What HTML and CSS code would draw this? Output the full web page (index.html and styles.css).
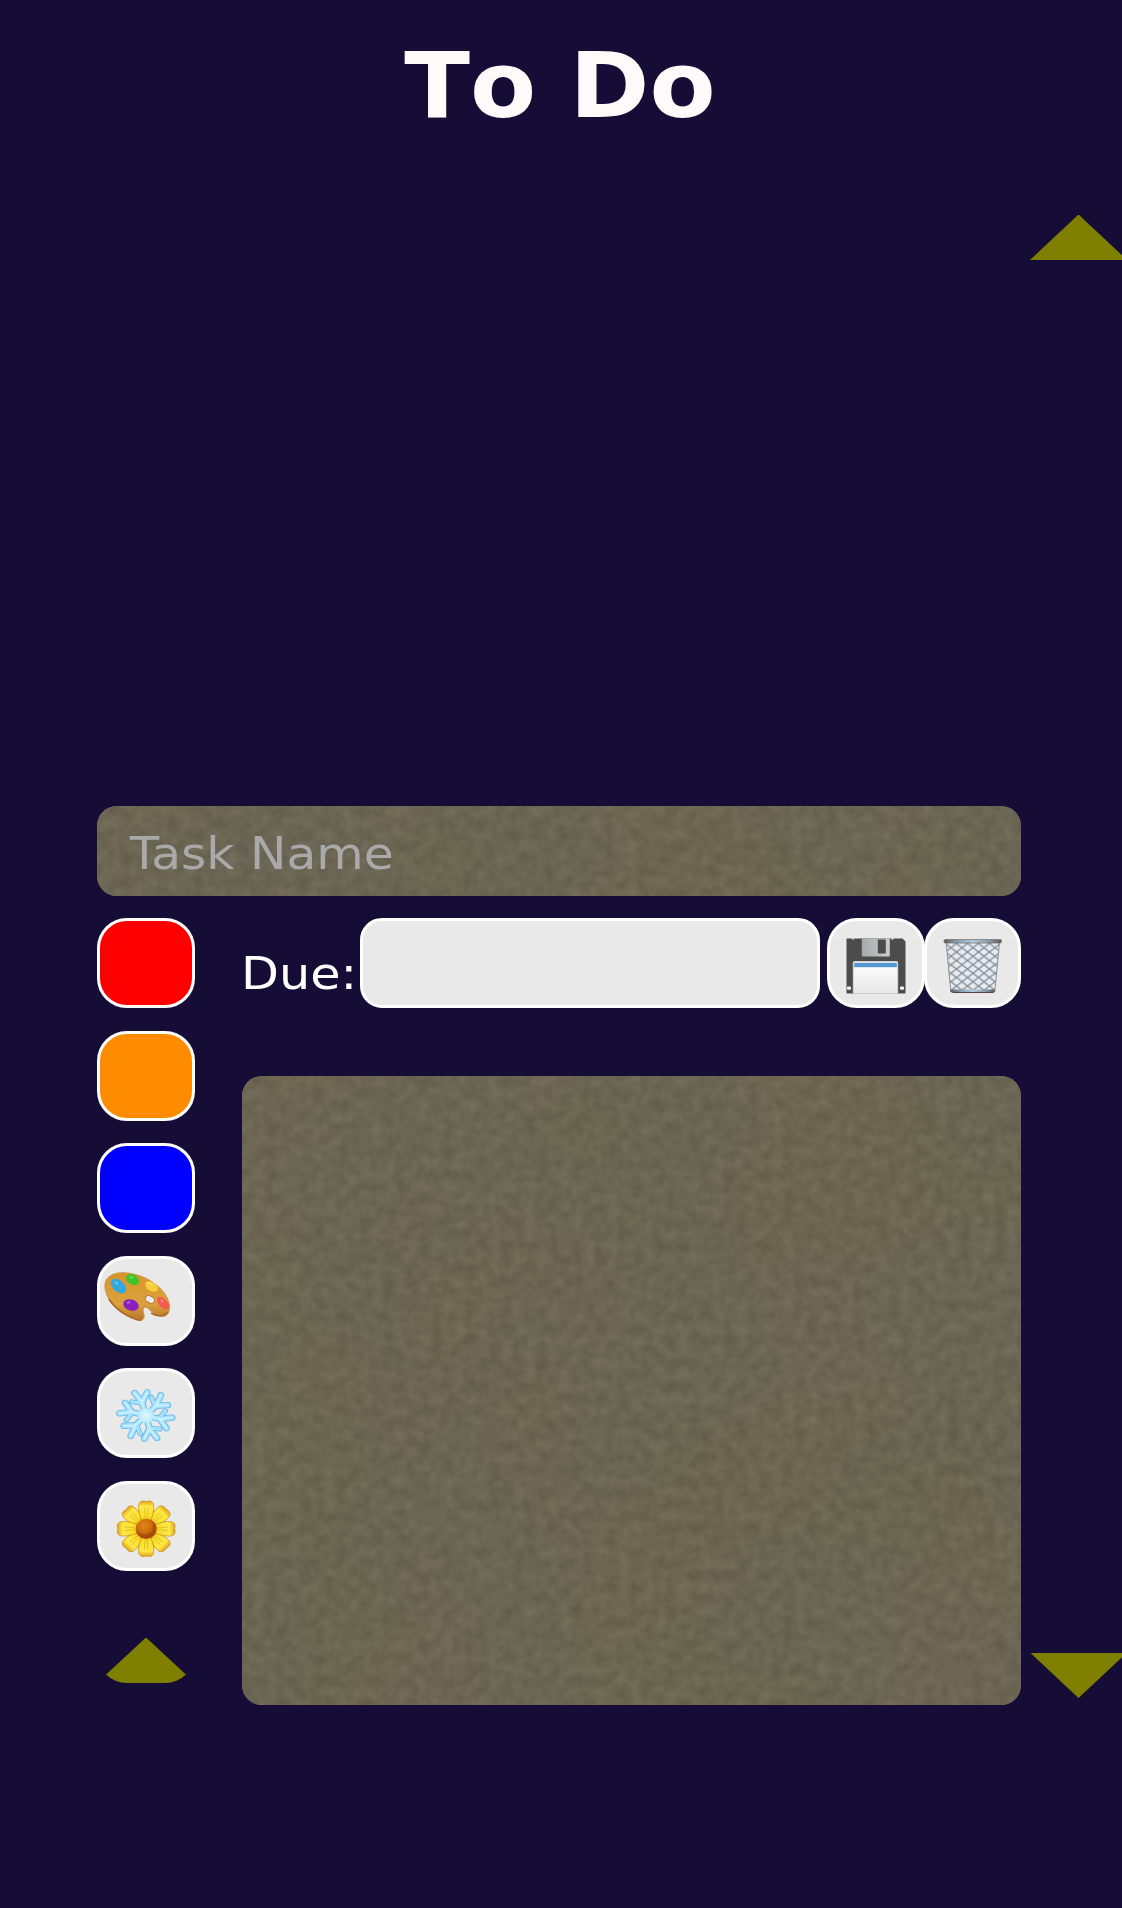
FILE: index.html
```html
<!DOCTYPE html>
<html lang="en">
<head>
<meta charset="utf-8">
<title>To Do</title>
<link rel="stylesheet" href="styles.css">
</head>
<body>
<h1 class="title">To Do</h1>
<main class="board">
  <section class="tasks"></section>
  <form class="editor">
    <div class="field name-field">
      <svg class="texture" aria-hidden="true">
        <defs>
          <filter id="stone" x="0" y="0" width="100%" height="100%" color-interpolation-filters="sRGB">
            <feTurbulence type="fractalNoise" baseFrequency="0.085" numOctaves="2" seed="11" result="fine"/>
            <feColorMatrix in="fine" values=".15 0 0 0 .344  .15 0 0 0 .324  .14 0 0 0 .253  0 0 0 0 1" result="grain"/>
            <feTurbulence type="fractalNoise" baseFrequency="0.006" numOctaves="2" seed="4" result="broad"/>
            <feColorMatrix in="broad" values=".06 0 0 0 .39  0 .03 0 0 .383  0 0 .08 0 .285  0 0 0 0 1" result="stain"/>
            <feComposite in="grain" in2="stain" operator="arithmetic" k2=".65" k3=".35"/>
          </filter>
        </defs>
        <rect width="100%" height="100%" filter="url(#stone)"/>
      </svg>
      <input class="name" type="text" placeholder="Task Name" aria-label="Task name">
    </div>
    <div class="tools">
      <button type="button" class="btn red" aria-label="Red"></button>
      <button type="button" class="btn orange" aria-label="Orange"></button>
      <button type="button" class="btn blue" aria-label="Blue"></button>
      <button type="button" class="btn" aria-label="Palette">
        <svg class="icon" viewBox="3.500 4 91 84">
          <defs><linearGradient id="wood" x2="0" y2="1"><stop stop-color="#d99427"/><stop offset=".65" stop-color="#dba13f"/><stop offset="1" stop-color="#b97327"/></linearGradient></defs>
          <path d="M8 29C9 19 22 16 34 18.500C48 21 61 29 68 39C74 48 74 57 69 60.500C65 62.500 58 60 54 56C51 53 48 51 46.500 53C45 56 49 61 46 64.500C42 68 31 61 24 57C14 50 7 39 8 29Z" fill="url(#wood)" stroke="#ce9650"/>
          <path d="M12 44C18 54 31 63 44 65.500M54 58C61 62 67 62 71 57" fill="none" stroke="#a8692b" stroke-width="1.600"/>
          <ellipse cx="21.500" cy="31" rx="9" ry="5.600" transform="rotate(42 21.500 31)" fill="#32a8df"/>
          <ellipse cx="35.500" cy="24.500" rx="7" ry="5" transform="rotate(30 35.500 24.500)" fill="#3ec52c"/>
          <ellipse cx="54.500" cy="31.500" rx="7" ry="4.500" transform="rotate(32 54.500 31.500)" fill="#f7cf3c"/>
          <ellipse cx="66" cy="48" rx="7.500" ry="4.300" transform="rotate(45 66 48)" fill="#f35c4c"/>
          <ellipse cx="34" cy="50" rx="8" ry="5.500" transform="rotate(18 34 50)" fill="#8c20bd"/>
          <ellipse cx="53" cy="44.500" rx="5" ry="3.400" transform="rotate(28 53 44.500)" fill="#e9e9e9" stroke="#ae7a34"/>
          <path d="M18 27l3 2M33 22l3 1M51 28l4 1M64 45l2 2M30 48l3-1" stroke="#fff" stroke-opacity=".3" stroke-width="2"/>
        </svg>
      </button>
      <button type="button" class="btn" aria-label="Snowflake">
        <svg class="icon" viewBox="3.500 3.500 91 84">
          <defs>
            <path id="arm" d="M0 0H16M14 0L25 -4.500M14 0L22.500 7.500"/>
            <g id="flake"><use href="#arm" transform="rotate(15)"/><use href="#arm" transform="rotate(75)"/><use href="#arm" transform="rotate(135)"/><use href="#arm" transform="rotate(195)"/><use href="#arm" transform="rotate(255)"/><use href="#arm" transform="rotate(315)"/></g>
            <path id="lobe" d="M13 0L17-9.500"/>
            <g id="lobes"><use href="#lobe" transform="rotate(15)"/><use href="#lobe" transform="rotate(75)"/><use href="#lobe" transform="rotate(135)"/><use href="#lobe" transform="rotate(195)"/><use href="#lobe" transform="rotate(255)"/><use href="#lobe" transform="rotate(315)"/></g>
            <radialGradient id="ice"><stop stop-color="#e3f7ff"/><stop offset="1" stop-color="#b8eaff"/></radialGradient>
          </defs>
          <g transform="translate(48.800 48) scale(1.040 .98)" fill="none" stroke-linecap="round" stroke-linejoin="round">
            <use href="#lobes" stroke="#66b6e4" stroke-width="5"/>
            <use href="#flake" stroke="#66b6e4" stroke-width="6.400"/>
            <use href="#lobes" stroke="#a5e2ff" stroke-width="3.400"/>
            <use href="#flake" stroke="#a5e2ff" stroke-width="4.800"/>
            <use href="#flake" stroke="#cff2ff" stroke-width="1.500"/>
            <circle r="7.500" fill="url(#ice)"/>
          </g>
        </svg>
      </button>
      <button type="button" class="btn" aria-label="Flower">
        <svg class="icon" viewBox="3.500 3.500 91 84">
          <defs>
            <linearGradient id="petalfill" gradientUnits="userSpaceOnUse" x1="0" y1="-6" x2="0" y2="-29"><stop stop-color="#e5a914"/><stop offset=".3" stop-color="#f9df2d"/><stop offset=".75" stop-color="#ffe945"/><stop offset="1" stop-color="#dfa21b"/></linearGradient>
            <radialGradient id="seed" cx=".4" cy=".35"><stop stop-color="#dc8618"/><stop offset=".7" stop-color="#cd6e0d"/><stop offset="1" stop-color="#a94b08"/></radialGradient>
            <g id="petal"><path d="M-4.500-7C-5.500-12-8.500-20-7.300-25.500C-6.500-29-2.500-29.500 0-28.300C2.500-29.500 6.500-29 7.300-25.500C8.500-20 5.500-12 4.500-7Z" fill="url(#petalfill)" stroke="#c99017" stroke-width=".8"/><path d="M-1-11L-1.800-22M1-11L1.800-22" stroke="#dcae20" stroke-width=".7"/></g>
          </defs>
          <g transform="translate(49.200 48.300) scale(1 .96)">
            <use href="#petal" transform="rotate(45)"/><use href="#petal" transform="rotate(135)"/><use href="#petal" transform="rotate(225)"/><use href="#petal" transform="rotate(315)"/>
            <use href="#petal"/><use href="#petal" transform="rotate(90)"/><use href="#petal" transform="rotate(180)"/><use href="#petal" transform="rotate(270)"/>
            <circle r="10.500" fill="url(#seed)"/>
          </g>
        </svg>
      </button>
      <button type="button" class="collapse" aria-label="Collapse"><span class="arrow up"></span></button>
    </div>
    <div class="details">
      <div class="due-row">
        <label class="due-label" for="due">Due:</label>
        <input class="due" id="due" type="text">
        <button type="button" class="btn save" aria-label="Save">
          <svg class="icon" viewBox="4 3.500 91 84">
            <defs><linearGradient id="metal"><stop stop-color="#a7a9ac"/><stop offset="1" stop-color="#cacbcc"/></linearGradient><linearGradient id="paper" x2="0" y2="1"><stop stop-color="#fff"/><stop offset="1" stop-color="#e7e7e8"/></linearGradient></defs>
            <path d="M20 21H76L79 24V76H20Z" fill="#4c4c4c"/>
            <path d="M25 21h3l-1.500 1.500zM64 21h4l-2 1.500z" fill="#e9e9e9"/>
            <rect x="35.300" y="21" width="28" height="18" rx="1" fill="url(#metal)"/>
            <rect x="51.300" y="22" width="8" height="14" rx=".7" fill="#4b4b4c"/>
            <path d="M26.300 76V45.500Q26.300 43.500 28.300 43.500H69.700Q71.700 43.500 71.700 45.500V76" fill="#d2d2d2"/>
            <rect x="27.500" y="45" width="43" height="31" fill="url(#paper)"/>
            <rect x="27.700" y="45.500" width="42.600" height="4.200" fill="#5197d2"/>
            <rect x="20.500" y="69" width="4" height="3.300" rx="1" fill="#f2f2f2"/>
            <rect x="73.500" y="69" width="4" height="3.300" rx="1" fill="#f2f2f2"/>
          </svg>
        </button>
        <button type="button" class="btn trash" aria-label="Delete">
          <svg class="icon" viewBox="4 3.500 91 84">
            <defs>
              <pattern id="mesh" width="11" height="8.500" patternUnits="userSpaceOnUse" x="44" y="26"><path d="M-2.200-1.700L13.200 10.200M-2.200 10.200L13.200-1.700" stroke="#7d858d" stroke-width="1.300" fill="none"/></pattern>
              <linearGradient id="rim"><stop stop-color="#66564d"/><stop offset=".2" stop-color="#8197ac"/><stop offset=".5" stop-color="#b2cadb"/><stop offset=".8" stop-color="#8295a6"/><stop offset="1" stop-color="#66564d"/></linearGradient>
            </defs>
            <path d="M22.700 25H76L71.300 74H27.300Z" fill="#e5ebf0"/>
            <path d="M22.700 25H76L71.300 74H27.300Z" fill="url(#mesh)" stroke="#8a9299"/>
            <rect x="20.500" y="22" width="57.500" height="3.600" rx="1.400" fill="url(#rim)" stroke="#76716f" stroke-width=".7"/>
            <rect x="27" y="72" width="44.500" height="3" rx="1.300" fill="url(#rim)"/>
            <path d="M29 75H70" stroke="#54433c" stroke-width="1"/>
          </svg>
        </button>
      </div>
      <div class="field notes-field">
        <svg class="texture" aria-hidden="true"><rect width="100%" height="100%" filter="url(#stone)"/></svg>
        <textarea class="notes" aria-label="Notes"></textarea>
      </div>
    </div>
  </form>
  <nav class="scroller">
    <span class="arrow up"></span>
    <span class="arrow down"></span>
  </nav>
</main>
</body>
</html>
```
FILE: styles.css
```css
* { box-sizing: border-box; }
body {
  margin: 0;
  height: 1908px;
  overflow: hidden;
  background: #160d36;
  color: #fff;
  font-family: "DejaVu Sans", Verdana, sans-serif;
}
.title {
  margin: 0;
  height: 214.500px;
  padding: 33px 2px 0 0;
  text-align: center;
  font-size: 90px;
  line-height: 105px;
  font-kerning: none;
  transform: scaleX(1.07);
  color: #fffafa;
}
.board {
  display: grid;
  grid-template-columns: 924px 97px;
  grid-template-rows: 591.500px 899px;
  column-gap: 9px;
  padding-left: 97px;
}
.tasks { grid-area: 1 / 1; }
.editor {
  grid-area: 2 / 1;
  display: grid;
  grid-template-columns: 98px 779px;
  grid-template-rows: 90px 787px;
  column-gap: 47px;
  row-gap: 22px;
}
.scroller {
  grid-area: 1 / 2 / 3 / 3;
  display: flex;
  flex-direction: column;
  justify-content: space-between;
  padding-bottom: 7px;
}
.arrow { display: block; width: 97px; height: 45.500px; background: #808000; }
.collapse .arrow { width: 98px; }
.up { clip-path: polygon(50% 0, 100% 100%, 0 100%); }
.down { clip-path: polygon(0 0, 100% 0, 50% 100%); }
.field { position: relative; overflow: hidden; border-radius: 20px; background: #6b6655; }
.name-field { grid-column: 1 / 3; }
.texture { position: absolute; inset: 0; width: 100%; height: 100%; }
.name, .notes {
  position: relative;
  display: block;
  width: 92.420%;
  height: 100%;
  border: 0;
  background: transparent;
  color: #fff;
  font: 45px "DejaVu Sans", Verdana, sans-serif;
  padding: 5px 30px 0;
  resize: none;
  outline: 0;
  transform: scaleX(1.082);
  transform-origin: 0 0;
}
.name::placeholder { color: #a9a9a9; opacity: 1; }
.tools { display: flex; flex-direction: column; gap: 22.500px; }
.btn {
  flex: none;
  display: block;
  width: 98px;
  height: 90px;
  padding: 0;
  border: 3px solid #fff;
  border-radius: 30px;
  background: #e9e9e9;
}
.red { background: #f00; }
.orange { background: #ff8c00; }
.blue { background: #00f; }
.icon { display: block; width: 92px; height: 84px; }
.collapse {
  display: flex;
  align-items: flex-end;
  width: 98px;
  height: 90px;
  padding: 0;
  border: 0;
  border-radius: 30px;
  overflow: hidden;
  background: transparent;
}
.details { display: flex; flex-direction: column; gap: 68px; }
.due-row { display: flex; height: 90px; }
.due-label {
  flex: none;
  width: 118px;
  margin-left: -1px;
  margin-right: 1px;
  padding-top: 29px;
  font-size: 45px;
  line-height: 54px;
  white-space: nowrap;
  transform: scaleX(1.095);
  transform-origin: 0 0;
}
.due { width: 460px; height: 90px; border: 3px solid #fff; border-radius: 22px; background: #e9e9e9; }
.save { margin-left: 7px; }
.trash { margin-left: -1px; width: 97px; }
.notes-field { height: 629px; }
```
